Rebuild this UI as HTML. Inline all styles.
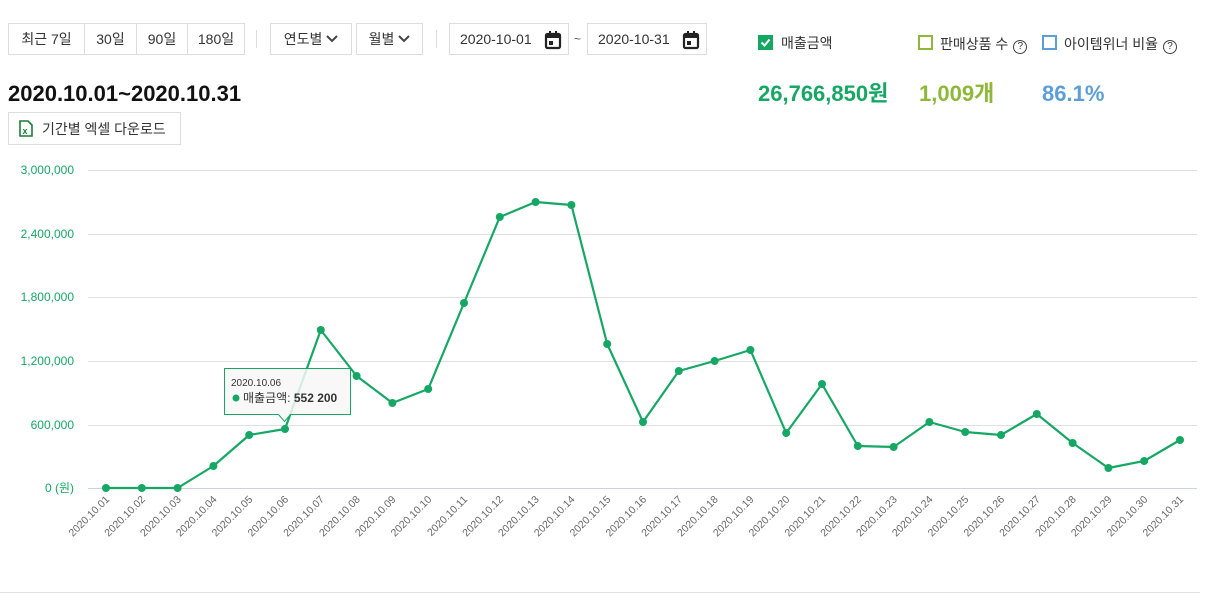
<!DOCTYPE html>
<html><head><meta charset="utf-8"><style>
body{margin:0;width:1223px;height:603px;background:#fff;font-family:"Liberation Sans","Noto Sans CJK KR",sans-serif;color:#222;position:relative;overflow:hidden}
.b{position:absolute;border:1px solid #ddd;background:#fff;font-size:14px;box-sizing:border-box;display:flex;align-items:center;justify-content:center;color:#333}
.t{position:absolute;white-space:nowrap}
.v{position:absolute;white-space:nowrap;top:80px;height:28px;line-height:28px;font-size:22px;font-weight:bold}
.cb{position:absolute;width:15px;height:15px;box-sizing:border-box;border:2px solid}
.q{display:inline-block;width:12px;height:12px;border:1.4px solid #444;border-radius:50%;font-size:10px;line-height:12px;text-align:center;vertical-align:0px;margin-left:5px}
</style></head><body>
<div class="b" style="left:8px;top:23px;width:77px;height:32px">최근 7일</div>
<div class="b" style="left:84px;top:23px;width:53px;height:32px">30일</div>
<div class="b" style="left:136px;top:23px;width:52px;height:32px">90일</div>
<div class="b" style="left:187px;top:23px;width:58px;height:32px">180일</div>
<div style="position:absolute;left:256px;top:30px;width:1px;height:18px;background:#ddd"></div>
<div class="b" style="left:270px;top:23px;width:82px;height:32px">연도별&nbsp;<svg width="12" height="8"><path d="M1 1l5 5 5-5" fill="none" stroke="#444" stroke-width="2"/></svg></div>
<div class="b" style="left:356px;top:23px;width:67px;height:32px">월별&nbsp;<svg width="12" height="8"><path d="M1 1l5 5 5-5" fill="none" stroke="#444" stroke-width="2"/></svg></div>
<div style="position:absolute;left:436px;top:30px;width:1px;height:18px;background:#ddd"></div>
<div class="b" style="left:449px;top:23px;width:120px;height:32px;justify-content:flex-start;padding-left:10px">2020-10-01<svg style="position:absolute;right:6px;top:6px" width="18" height="20"><rect x="2" y="4" width="14" height="14" rx="1.5" fill="none" stroke="#222" stroke-width="2.2"/><rect x="2" y="4" width="14" height="4" fill="#222"/><rect x="5" y="1" width="2" height="4" fill="#222"/><rect x="11" y="1" width="2" height="4" fill="#222"/><rect x="5" y="11" width="4" height="4" fill="#222"/></svg></div>
<div class="t" style="left:574px;top:32px;font-size:12px;color:#555">~</div>
<div class="b" style="left:587px;top:23px;width:120px;height:32px;justify-content:flex-start;padding-left:10px">2020-10-31<svg style="position:absolute;right:6px;top:6px" width="18" height="20"><rect x="2" y="4" width="14" height="14" rx="1.5" fill="none" stroke="#222" stroke-width="2.2"/><rect x="2" y="4" width="14" height="4" fill="#222"/><rect x="5" y="1" width="2" height="4" fill="#222"/><rect x="11" y="1" width="2" height="4" fill="#222"/><rect x="5" y="11" width="4" height="4" fill="#222"/></svg></div>
<div class="t" style="left:8px;top:81px;font-size:22px;font-weight:bold;color:#111">2020.10.01~2020.10.31</div>
<div class="b" style="left:8px;top:112px;width:173px;height:33px;justify-content:flex-start;padding-left:10px"><svg width="14" height="17" style="margin-right:9px"><path d="M1 1h8l4 4v11H1z" fill="#fff" stroke="#1a7f37" stroke-width="1.6"/><text x="3.5" y="14" font-size="9" font-weight="bold" fill="#1a7f37" font-family="Liberation Sans">x</text></svg>기간별 엑셀 다운로드</div>

<div class="cb" style="left:758px;top:35px;background:#16a765;border-color:#16a765"><svg width="11" height="11" style="position:absolute;left:0;top:0"><path d="M1.5 5.5l3 3 5-6" fill="none" stroke="#fff" stroke-width="2"/></svg></div>
<div class="t" style="left:781px;top:33px;font-size:14px;color:#333">매출금액</div>
<div class="cb" style="left:918px;top:35px;border-color:#8fb83a"></div>
<div class="t" style="left:940px;top:34px;font-size:14px;color:#333">판매상품 수<span class="q">?</span></div>
<div class="cb" style="left:1042px;top:35px;border-color:#5b9fd6"></div>
<div class="t" style="left:1064px;top:34px;font-size:14px;color:#333">아이템위너 비율<span class="q">?</span></div>
<div class="v" style="left:758px;color:#16a765">26,766,850원</div>
<div class="v" style="left:919px;color:#8fb83a">1,009개</div>
<div class="v" style="left:1042px;top:80px;color:#5b9fd6">86.1%</div>

<svg style="position:absolute;left:0;top:0" width="1223" height="603" font-family="Liberation Sans, Noto Sans CJK KR, sans-serif">
<g stroke="#dde0e6" stroke-width="1">
<line x1="88" x2="1197" y1="170.5" y2="170.5"/><line x1="88" x2="1197" y1="234.5" y2="234.5"/><line x1="88" x2="1197" y1="297.5" y2="297.5"/><line x1="88" x2="1197" y1="361.5" y2="361.5"/><line x1="88" x2="1197" y1="425.5" y2="425.5"/><line x1="88" x2="1197" y1="488.5" y2="488.5" stroke="#ccd3e0"/>
<line x1="0" x2="1200" y1="592.5" y2="592.5"/>
</g>
<g fill="#16a765" font-size="12" text-anchor="end">
<text x="74" y="174">3,000,000</text><text x="74" y="238">2,400,000</text><text x="74" y="301">1,800,000</text><text x="74" y="365">1,200,000</text><text x="74" y="429">600,000</text><text x="74" y="492">0 (원)</text>
</g>
<polyline fill="none" stroke="#16a765" stroke-width="2.2" stroke-linejoin="round" points="106,488 141.8,488 177.6,488 213.4,466 249.2,435 285,429 320.8,330 356.6,376 392.4,403 428.2,389 464,303 499.8,217 535.6,202 571.4,205 607.2,344 643,422 678.8,371 714.6,361 750.4,350 786.2,433 822,384 857.8,446 893.6,447 929.4,422 965.2,432 1001,435 1036.8,414 1072.6,443 1108.4,468 1144.2,461 1180,440"/>
<g fill="#16a765">
<circle cx="106" cy="488" r="4"/><circle cx="141.8" cy="488" r="4"/><circle cx="177.6" cy="488" r="4"/><circle cx="213.4" cy="466" r="4"/><circle cx="249.2" cy="435" r="4"/><circle cx="285" cy="429" r="4"/><circle cx="320.8" cy="330" r="4"/><circle cx="356.6" cy="376" r="4"/><circle cx="392.4" cy="403" r="4"/><circle cx="428.2" cy="389" r="4"/><circle cx="464" cy="303" r="4"/><circle cx="499.8" cy="217" r="4"/><circle cx="535.6" cy="202" r="4"/><circle cx="571.4" cy="205" r="4"/><circle cx="607.2" cy="344" r="4"/><circle cx="643" cy="422" r="4"/><circle cx="678.8" cy="371" r="4"/><circle cx="714.6" cy="361" r="4"/><circle cx="750.4" cy="350" r="4"/><circle cx="786.2" cy="433" r="4"/><circle cx="822" cy="384" r="4"/><circle cx="857.8" cy="446" r="4"/><circle cx="893.6" cy="447" r="4"/><circle cx="929.4" cy="422" r="4"/><circle cx="965.2" cy="432" r="4"/><circle cx="1001" cy="435" r="4"/><circle cx="1036.8" cy="414" r="4"/><circle cx="1072.6" cy="443" r="4"/><circle cx="1108.4" cy="468" r="4"/><circle cx="1144.2" cy="461" r="4"/><circle cx="1180" cy="440" r="4"/>
</g>
<g fill="#666" font-size="10.5" text-anchor="end">
<text transform="translate(110,500) rotate(-45)">2020.10.01</text><text transform="translate(145.8,500) rotate(-45)">2020.10.02</text><text transform="translate(181.6,500) rotate(-45)">2020.10.03</text><text transform="translate(217.4,500) rotate(-45)">2020.10.04</text><text transform="translate(253.2,500) rotate(-45)">2020.10.05</text><text transform="translate(289,500) rotate(-45)">2020.10.06</text><text transform="translate(324.8,500) rotate(-45)">2020.10.07</text><text transform="translate(360.6,500) rotate(-45)">2020.10.08</text><text transform="translate(396.4,500) rotate(-45)">2020.10.09</text><text transform="translate(432.2,500) rotate(-45)">2020.10.10</text><text transform="translate(468,500) rotate(-45)">2020.10.11</text><text transform="translate(503.8,500) rotate(-45)">2020.10.12</text><text transform="translate(539.6,500) rotate(-45)">2020.10.13</text><text transform="translate(575.4,500) rotate(-45)">2020.10.14</text><text transform="translate(611.2,500) rotate(-45)">2020.10.15</text><text transform="translate(647,500) rotate(-45)">2020.10.16</text><text transform="translate(682.8,500) rotate(-45)">2020.10.17</text><text transform="translate(718.6,500) rotate(-45)">2020.10.18</text><text transform="translate(754.4,500) rotate(-45)">2020.10.19</text><text transform="translate(790.2,500) rotate(-45)">2020.10.20</text><text transform="translate(826,500) rotate(-45)">2020.10.21</text><text transform="translate(861.8,500) rotate(-45)">2020.10.22</text><text transform="translate(897.6,500) rotate(-45)">2020.10.23</text><text transform="translate(933.4,500) rotate(-45)">2020.10.24</text><text transform="translate(969.2,500) rotate(-45)">2020.10.25</text><text transform="translate(1005,500) rotate(-45)">2020.10.26</text><text transform="translate(1040.8,500) rotate(-45)">2020.10.27</text><text transform="translate(1076.6,500) rotate(-45)">2020.10.28</text><text transform="translate(1112.4,500) rotate(-45)">2020.10.29</text><text transform="translate(1148.2,500) rotate(-45)">2020.10.30</text><text transform="translate(1184,500) rotate(-45)">2020.10.31</text>
</g>
<path d="M224.5 368.5h126v46h-60l-6 7-6-7h-54z" fill="rgba(247,247,247,0.85)" stroke="#16a765" stroke-width="1"/>
<text x="231" y="386" font-size="10" fill="#333">2020.10.06</text>
<circle cx="236" cy="398" r="3.5" fill="#16a765"/>
<text x="243" y="402" font-size="12" fill="#333">매출금액: <tspan font-weight="bold">552 200</tspan></text>
</svg>
</body></html>
